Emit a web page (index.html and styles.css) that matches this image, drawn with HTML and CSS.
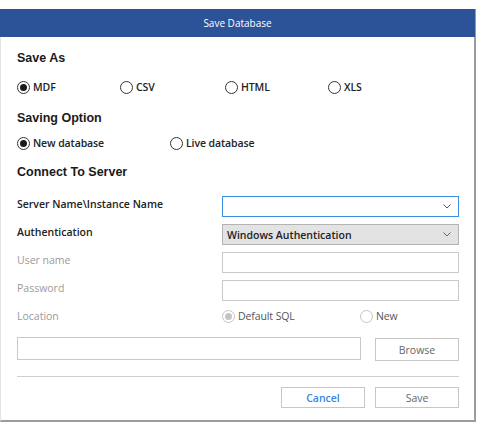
FILE: index.html
```html
<!DOCTYPE html>
<html>
<head>
<meta charset="utf-8">
<link rel="stylesheet" href="styles.css">
</head>
<body>
<div class="window">
  <div class="titlebar">Save Database</div>
  <div class="content">
    <h2 class="heading h-saveas">Save As</h2>
    <div class="radios four">
      <label class="radio"><span class="circle checked"></span>MDF</label>
      <label class="radio"><span class="circle"></span>CSV</label>
      <label class="radio"><span class="circle"></span>HTML</label>
      <label class="radio"><span class="circle"></span>XLS</label>
    </div>
    <h2 class="heading h-saving">Saving Option</h2>
    <div class="radios two">
      <label class="radio"><span class="circle checked"></span>New database</label>
      <label class="radio"><span class="circle"></span>Live database</label>
    </div>
    <h2 class="heading h-connect">Connect To Server</h2>
    <div class="form">
      <span class="label">Server Name\Instance Name</span>
      <div class="field select focus">
        <span class="value"></span>
        <svg class="chev" width="8" height="5" viewBox="0 0 8 5"><path d="M0.5 0.5 L4 4 L7.5 0.5" fill="none" stroke="#555" stroke-width="1"/></svg>
      </div>
      <span class="label">Authentication</span>
      <div class="field select gray">
        <span class="value">Windows Authentication</span>
        <svg class="chev" width="8" height="5" viewBox="0 0 8 5"><path d="M0.5 0.5 L4 4 L7.5 0.5" fill="none" stroke="#666" stroke-width="1"/></svg>
      </div>
      <span class="label muted">User name</span>
      <div class="field"></div>
      <span class="label muted">Password</span>
      <div class="field"></div>
      <span class="label muted">Location</span>
      <div class="loc">
        <label class="radio disabled"><span class="circle checked"></span>Default SQL</label>
        <label class="radio disabled"><span class="circle"></span>New</label>
      </div>
    </div>
    <div class="path-row">
      <div class="field path"></div>
      <button class="btn browse">Browse</button>
    </div>
    <div class="sep"></div>
    <div class="actions">
      <button class="btn cancel">Cancel</button>
      <button class="btn save">Save</button>
    </div>
  </div>
</div>
</body>
</html>
```
FILE: styles.css
```css
* { box-sizing: border-box; }
html, body { margin: 0; padding: 0; background: #ffffff; }
body {
  font-family: "Open Sans", "Noto Sans", "Liberation Sans", sans-serif;
  color: #222;
}
.window {
  margin-top: 9px;
  width: 476px;
  border-left: 1px solid #e4e4e4;
  border-right: 2px solid #9c9c9c;
  border-bottom: 2px solid #9c9c9c;
  background: #fff;
}
.titlebar {
  height: 28px;
  background: #2c5298;
  color: #fff;
  font-size: 10px;
  line-height: 28px;
  text-align: center;
  margin-left: -1px;
  margin-right: -1px;
}
.content {
  padding: 13px 15px 12px 16px;
}
.heading {
  margin: 0;
  font-family: "Liberation Sans", Arial, sans-serif;
  font-weight: bold;
  font-size: 12.5px;
  line-height: 16px;
  color: #1a1a1a;
}
.h-saving { margin-top: 15px; }
.h-connect { margin-top: 13px; }
.radios {
  display: grid;
  height: 16px;
  align-items: center;
}
.radios.four { grid-template-columns: 103px 105px 103px 103px; margin-top: 13px; }
.radios.two { grid-template-columns: 153px 153px; margin-top: 9px; }
.radio {
  display: flex;
  align-items: center;
  gap: 3px;
  font-size: 10.5px;
  font-weight: 600;
  color: #222;
  line-height: 16px;
  white-space: nowrap;
  letter-spacing: -0.1px;
}
.circle {
  width: 13px;
  height: 13px;
  border: 1px solid #333;
  border-radius: 50%;
  display: flex;
  align-items: center;
  justify-content: center;
  flex: none;
}
.circle.checked::after {
  content: "";
  width: 7px;
  height: 7px;
  border-radius: 50%;
  background: #1a1a1a;
}
.radio.disabled { color: #555; font-weight: 500; }
.radio.disabled .circle { border-color: #c4c4c4; }
.radio.disabled .circle.checked::after { background: #c4c4c4; }
.form {
  margin-top: 16px;
  display: grid;
  grid-template-columns: 205px 237px;
  grid-auto-rows: 21px;
  row-gap: 7px;
}
.label {
  font-size: 10.5px;
  font-weight: 600;
  line-height: 16px;
  color: #222;
  align-self: start;
}
.label.muted { color: #9a9a9a; font-weight: 500; }
.field {
  border: 1px solid #c9c9c9;
  background: #fff;
  height: 21px;
}
.select {
  display: flex;
  align-items: center;
  justify-content: space-between;
  padding: 0 7px 0 4px;
}
.select.focus { border-color: #3d8ee0; }
.select.gray { background: #e3e3e3; border-color: #b4b4b4; }
.value {
  font-size: 10.5px;
  font-weight: 600;
  color: #222;
}
.chev { flex: none; }
.loc {
  display: grid;
  grid-template-columns: 138px auto;
  align-items: start;
  height: 16px;
}
.path-row {
  margin-top: 8px;
  display: flex;
  justify-content: space-between;
  align-items: start;
}
.path { width: 344px; height: 23px; }
.btn {
  width: 84px;
  height: 23px;
  border: 1px solid #c6c6c6;
  background: #fff;
  font-family: "Open Sans", "Noto Sans", sans-serif;
  font-size: 10.5px;
  font-weight: 500;
  color: #666;
  padding: 0;
}
.browse { margin-top: 1px; }
.sep {
  margin-top: 15px;
  height: 1px;
  background: #cfcfcf;
}
.actions {
  margin-top: 10px;
  display: flex;
  justify-content: flex-end;
  gap: 10px;
}
.actions .btn { height: 21px; }
.cancel { color: #3a86e0; font-weight: 600; }
```
